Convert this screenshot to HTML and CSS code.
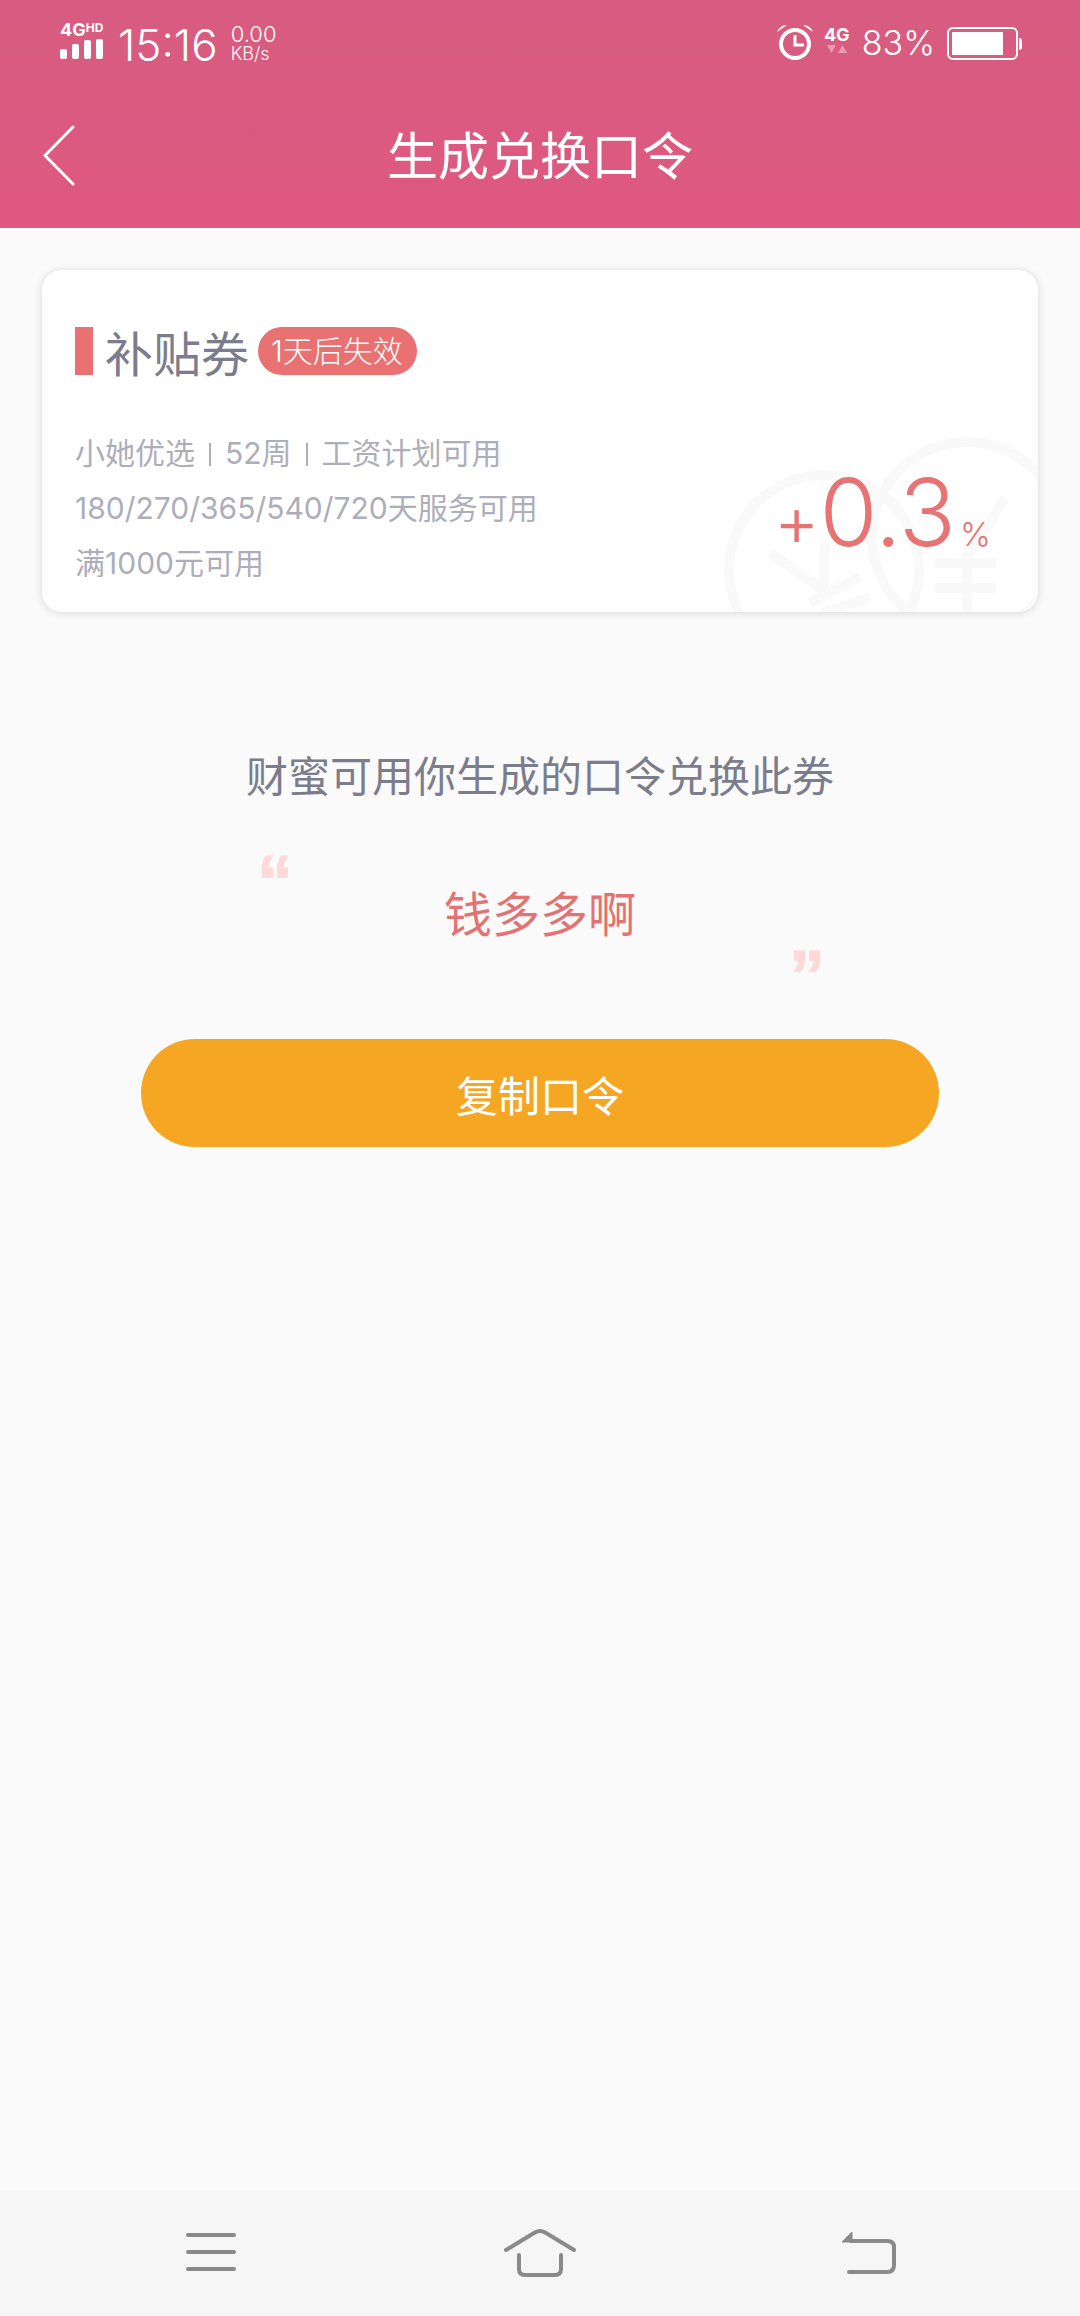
FILE: index.html
```html
<!DOCTYPE html>
<html lang="zh-CN">
<head>
    <meta charset="UTF-8">
    <title>生成兑换口令</title>
    <link rel="stylesheet" href="styles.css">
</head>
<body>
    <header class="top">
        <div class="status">
            <div class="status-left">
                <div class="signal">
                    <div class="signal-text"><span class="net">4G</span><span class="hd">HD</span></div>
                    <div class="bars"><i class="bar-1"></i><i class="bar-2"></i><i class="bar-3"></i><i class="bar-4"></i></div>
                </div>
                <span class="time">15:16</span>
                <div class="speed"><span class="speed-num">0.00</span><span class="speed-unit">KB/s</span></div>
            </div>
            <div class="status-right">
                <svg class="alarm" width="38" height="36" viewBox="0 0 38 36">
                    <circle cx="19" cy="20" r="14" fill="none" stroke="#fff" stroke-width="4"/>
                    <path d="M19 11v10h9" fill="none" stroke="#fff" stroke-width="3"/>
                    <path d="M1 8 Q4 1 11 1 Z M37 8 Q34 1 27 1 Z" fill="#fff"/>
                </svg>
                <div class="net-right">
                    <span class="net-label">4G</span>
                    <svg width="20" height="9" viewBox="0 0 20 9"><path d="M0 0h9l-4.500 8z M11 8l4.500-8 4.500 8z" fill="#fff" opacity="0.4"/></svg>
                </div>
                <span class="percent">83%</span>
                <div class="battery"><div class="battery-fill"></div></div>
                <div class="battery-tip"></div>
            </div>
        </div>
        <div class="titlebar">
            <svg class="back" width="34" height="62" viewBox="0 0 34 62"><path d="M31 2 L3 30.500 L31 59" fill="none" stroke="#fff" stroke-width="3" stroke-linecap="round" stroke-linejoin="round"/></svg>
            <h1 class="page-title">生成兑换口令</h1>
        </div>
    </header>

    <main class="content">
        <section class="coupon">
            <svg class="watermark" width="996" height="342" viewBox="0 0 996 342">
                <g fill="none" stroke="#f9f9f9" stroke-width="10">
                    <circle cx="782" cy="300" r="95"/>
                    <circle cx="925" cy="267" r="95"/>
                    <path d="M728 283 L781 320 L783 273 M768 333 L818 307 M781 343 L828 327"/>
                    <path d="M963 228 L925 287 V342 M893 293 H954 M893 318 H954"/>
                </g>
            </svg>
            <div class="coupon-head">
                <span class="marker"></span>
                <span class="coupon-name">补贴券</span>
                <span class="expire">1天后失效</span>
            </div>
            <div class="coupon-rules">
                <p class="rule rule-first">小她优选<span class="sep"></span>52周<span class="sep"></span>工资计划可用</p>
                <p class="rule rule-second">180/270/365/540/720天服务可用</p>
                <p class="rule rule-third">满1000元可用</p>
            </div>
            <div class="rate"><span class="plus">+</span><span class="rate-num">0.3</span><span class="rate-unit">%</span></div>
        </section>

        <p class="prompt">财蜜可用你生成的口令兑换此券</p>

        <div class="code-box">
            <span class="quote quote-open">“</span>
            <span class="code">钱多多啊</span>
            <span class="quote quote-close">”</span>
        </div>

        <button class="copy-btn">复制口令</button>
    </main>

    <nav class="navbar">
        <svg width="52" height="42" viewBox="0 0 52 42"><path d="M3 3h46M3 20h46M3 37h46" fill="none" stroke="#8a8a8a" stroke-width="4" stroke-linecap="round"/></svg>
        <svg width="72" height="48" viewBox="0 0 72 48"><path d="M2 21 L30 4 Q36 0 42 4 L70 21 M15 26 V40 Q15 46 21 46 H51 Q57 46 57 40 V26" fill="none" stroke="#8a8a8a" stroke-width="4" stroke-linecap="round" stroke-linejoin="round"/></svg>
        <svg width="56" height="44" viewBox="0 0 56 44"><path d="M10 10 H46 Q53 10 53 16 V34 Q53 41 46 41 H8" fill="none" stroke="#8a8a8a" stroke-width="4" stroke-linecap="round"/><path d="M1 11 L11 1 V11 Z" fill="#8a8a8a" stroke="#8a8a8a" stroke-width="1"/></svg>
    </nav>
</body>
</html>
```

FILE: styles.css
```css
* {
    box-sizing: border-box;
}
body {
    margin: 0;
    width: 1080px;
    height: 2316px;
    display: flex;
    flex-direction: column;
    background-color: #fafafa;
    font-family: Inter, "Noto Sans CJK SC", sans-serif;
}
p, h1 {
    margin: 0;
    font-weight: normal;
}

/* header */
.top {
    height: 228px;
    background: linear-gradient(180deg, #d75c80, #df5881);
    color: white;
}
.status {
    height: 80px;
    display: flex;
    justify-content: space-between;
    padding: 21px 58px 0 60px;
}
.status-left, .status-right {
    display: flex;
    align-items: flex-start;
}
.signal {
    width: 44px;
    margin-right: 14px;
}
.signal-text {
    display: flex;
    align-items: flex-start;
    height: 18px;
    font-weight: bold;
    line-height: 18px;
}
.net {
    font-size: 18px;
}
.hd {
    font-size: 12px;
    line-height: 13px;
}
.bars {
    display: flex;
    align-items: flex-end;
    gap: 5px;
    height: 20px;
}
.bars i {
    display: block;
    width: 7px;
    background-color: white;
    border-radius: 2px;
}
.bar-1 { height: 10px; }
.bar-2 { height: 15px; }
.bar-3 { height: 19px; }
.bar-4 { height: 20px; }
.time {
    font-size: 44px;
    font-weight: 300;
    line-height: 48px;
    margin-right: 13px;
}
.speed {
    display: flex;
    flex-direction: column;
    font-weight: 300;
    margin-top: 3px;
}
.speed-num {
    font-size: 22px;
    line-height: 20px;
}
.speed-unit {
    font-size: 18px;
    line-height: 19px;
}
.alarm {
    margin: 3px 10px 0 0;
}
.net-right {
    display: flex;
    flex-direction: column;
    align-items: center;
    width: 26px;
    margin: 4px 12px 0 0;
}
.net-label {
    font-size: 18px;
    font-weight: bold;
    line-height: 20px;
}
.percent {
    font-size: 34px;
    font-weight: 300;
    line-height: 44px;
    margin-right: 12px;
}
.battery {
    width: 71px;
    height: 33px;
    margin-top: 6px;
    border: 2px solid white;
    border-radius: 6px;
    padding: 3px;
}
.battery-fill {
    width: 51px;
    height: 23px;
    background-color: white;
}
.battery-tip {
    width: 3px;
    height: 12px;
    margin: 17px 0 0 1px;
    background-color: white;
    border-radius: 0 3px 3px 0;
}
.titlebar {
    height: 148px;
    position: relative;
    display: flex;
    align-items: center;
    justify-content: center;
    padding-top: 6px;
}
.back {
    position: absolute;
    left: 42px;
    top: 45px;
}
.page-title {
    font-size: 51px;
    line-height: 56px;
}

/* main */
.content {
    flex: 1;
    display: flex;
    flex-direction: column;
    align-items: center;
    padding-top: 42px;
}
.coupon {
    position: relative;
    width: 996px;
    height: 342px;
    overflow: hidden;
    background-color: white;
    border-radius: 20px;
    box-shadow: 0 1px 8px rgba(0, 0, 0, 0.14);
    padding: 57px 33px 0;
}
.watermark {
    position: absolute;
    left: 0;
    top: 0;
}
.coupon-head, .coupon-rules {
    position: relative;
}
.coupon-head {
    display: flex;
    align-items: center;
    height: 48px;
}
.marker {
    width: 18px;
    height: 48px;
    background-color: #e97171;
    margin-right: 12px;
}
.coupon-name {
    font-size: 48px;
    color: #7c7d8c;
    margin-right: 9px;
}
.expire {
    height: 48px;
    padding: 0 14px 0 13px;
    border-radius: 24px;
    background-color: #e97171;
    color: white;
    font-size: 30px;
    font-weight: 300;
    line-height: 48px;
}
.coupon-rules {
    margin-top: 58px;
    color: #adaeba;
    font-size: 30px;
    font-weight: 300;
}
.rule {
    white-space: nowrap;
    line-height: 40px;
}
.rule-second {
    margin-top: 15px;
}
.rule-third {
    margin-top: 15px;
}
.sep {
    display: inline-block;
    width: 2px;
    height: 23px;
    margin: 0 14px;
    background-color: #adaeba;
    vertical-align: -2px;
}
.rate {
    position: absolute;
    right: 47px;
    bottom: 46px;
    display: flex;
    align-items: baseline;
    color: #e77474;
    font-weight: 300;
}
.plus {
    font-size: 70px;
    line-height: 90px;
}
.rate-num {
    font-size: 94px;
    line-height: 90px;
}
.rate-unit {
    font-size: 33px;
    margin-left: 4px;
}
.prompt {
    margin-top: 140px;
    font-size: 42px;
    line-height: 50px;
    color: #7c7d8c;
}
.code-box {
    position: relative;
    width: 564px;
    height: 120px;
    margin-top: 53px;
    text-align: center;
}
.code {
    display: block;
    padding-top: 32px;
    font-size: 48px;
    line-height: 56px;
    color: #e37272;
}
.quote {
    position: absolute;
    font-family: "Liberation Sans", sans-serif;
    font-size: 72px;
    font-weight: bold;
    line-height: 72px;
    color: #ffd9d9;
    -webkit-text-stroke: 1px #ffd9d9;
}
.quote-open {
    left: -1px;
    top: -10px;
}
.quote-close {
    right: -3px;
    top: 85px;
}
.copy-btn {
    width: 798px;
    height: 108px;
    margin-top: 64px;
    border: none;
    border-radius: 54px;
    background-color: #f5a623;
    color: #fff;
    font-family: inherit;
    font-size: 42px;
}

/* bottom bar */
.navbar {
    height: 126px;
    background-color: #f6f6f6;
    display: grid;
    grid-template-columns: repeat(3, 329px);
    justify-content: center;
    justify-items: center;
    align-items: center;
}
```
